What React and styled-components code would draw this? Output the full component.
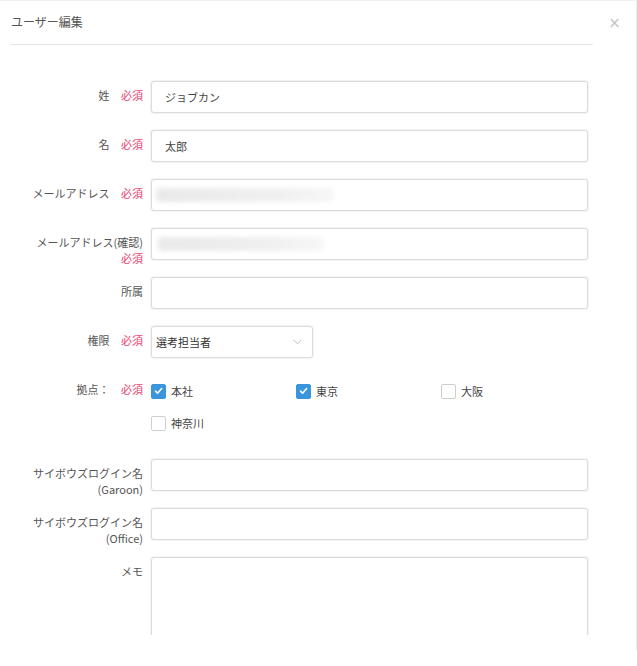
import React from "react";
import styled, { createGlobalStyle } from "styled-components";

const Global = createGlobalStyle`
  html, body { margin: 0; padding: 0; background: #fff; }
  body { font-family: "Open Sans", "Noto Sans CJK JP", sans-serif; color: #555; }
  * { box-sizing: border-box; }
`;

const Page = styled.div`
  width: 637px;
  height: 650px;
  border-top: 1px solid #f1f1f1;
  border-right: 1px solid #ececec;
`;

const Modal = styled.div`
  width: 636px;
  height: 634px;
  overflow: hidden;
  background: #fff;
`;

const Header = styled.div`
  display: flex;
  align-items: stretch;
  padding-left: 10px;
`;

const TitleBar = styled.div`
  width: 583px;
  height: 44px;
  display: flex;
  align-items: center;
  padding: 0 1px 3px;
  border-bottom: 1px solid #e6e6e6;
`;

const Title = styled.h2`
  margin: 0;
  font-size: 12px;
  font-weight: 400;
  color: #555;
  font-family: "Noto Sans CJK JP", sans-serif;
`;

const Close = styled.button`
  flex: 1;
  border: 0;
  background: none;
  height: 44px;
  padding: 0;
  font-size: 15px;
  color: #c4c4c4;
  font-family: "DejaVu Sans", sans-serif;
  cursor: pointer;
`;

const Form = styled.div`
  display: grid;
  grid-template-columns: 143px 437px;
  column-gap: 8px;
  row-gap: 17px;
  padding-top: 36px;
`;

const Label = styled.div`
  height: 32px;
  padding: 6px 0 0 20px;
  text-align: right;
  font-size: 11px;
  line-height: 16px;
  color: #555;
  font-family: "Noto Sans CJK JP", sans-serif;
`;

const Req = styled.span`
  color: #e8436f;
  margin-left: 9px;
  white-space: nowrap;
`;

const Input = styled.div`
  height: 32px;
  border: 1px solid #dcdcdc;
  box-shadow: 0 0 0 1px #f3f3f3;
  border-radius: 3px;
  display: flex;
  align-items: center;
  padding-left: ${p => p.$pad ?? 13}px;
  font-size: 11px;
  color: #444;
  font-family: "Noto Sans CJK JP", sans-serif;
  background: #fff;
`;

const TextArea = styled(Input)`
  height: 110px;
`;

const Blur = styled.span`
  display: block;
  height: 14px;
  border-radius: 4px;
  background: linear-gradient(90deg, #e9e9e9, #f0f0f0 70%, #f7f7f7);
  filter: blur(2.5px);
`;

const Select = styled.div`
  width: 162px;
  height: 32px;
  border: 1px solid #dcdcdc;
  box-shadow: 0 0 0 1px #f3f3f3;
  border-radius: 3px;
  display: flex;
  align-items: center;
  justify-content: space-between;
  padding: 0 10px 0 4px;
  font-size: 11px;
  color: #333;
  font-family: "Noto Sans CJK JP", sans-serif;
`;

const Checks = styled.div`
  display: grid;
  grid-template-columns: repeat(3, 145px);
  grid-auto-rows: 32px;
  padding-bottom: 3px;
`;

const CheckItem = styled.label`
  display: flex;
  align-items: center;
  gap: 5px;
  font-size: 11px;
  color: #444;
  font-family: "Noto Sans CJK JP", sans-serif;
`;

const Box = styled.span`
  width: 15px;
  height: 15px;
  border-radius: 2px;
  display: flex;
  align-items: center;
  justify-content: center;
  background: ${p => (p.$on ? "#3a95dc" : "#fff")};
  border: 1px solid ${p => (p.$on ? "#3a95dc" : "#cfcfcf")};
`;

const Check = ({ on, label }) => (
  <CheckItem>
    <Box $on={on}>
      {on && (
        <svg width="9" height="8" viewBox="0 0 9 8">
          <path d="M1.5 4.2 L3.6 6.2 L7.6 1.6" fill="none" stroke="#fff" strokeWidth="1.6" strokeLinecap="round" strokeLinejoin="round" />
        </svg>
      )}
    </Box>
    {label}
  </CheckItem>
);

const Chevron = () => (
  <svg width="9" height="6" viewBox="0 0 9 6">
    <path d="M0.5 0.8 L4.5 4.8 L8.5 0.8" fill="none" stroke="#bdbdbd" strokeWidth="1" />
  </svg>
);

const Row = ({ label, req, children }) => (
  <>
    <Label>
      {label}
      {req && <> <Req>必須</Req></>}
    </Label>
    {children}
  </>
);

export default function App() {
  return (
    <Page>
      <Global />
      <Modal>
        <Header>
          <TitleBar>
            <Title>ユーザー編集</Title>
          </TitleBar>
          <Close aria-label="close">×</Close>
        </Header>
        <Form>
          <Row label="姓" req>
            <Input>ジョブカン</Input>
          </Row>
          <Row label="名" req>
            <Input>太郎</Input>
          </Row>
          <Row label="メールアドレス" req>
            <Input $pad={4}>
              <Blur style={{ width: 178 }} />
            </Input>
          </Row>
          <Row label="メールアドレス(確認)" req>
            <Input $pad={6}>
              <Blur style={{ width: 166 }} />
            </Input>
          </Row>
          <Row label="所属">
            <Input />
          </Row>
          <Row label="権限" req>
            <Select>
              選考担当者
              <Chevron />
            </Select>
          </Row>
          <Row label="拠点：" req>
            <Checks>
              <Check on label="本社" />
              <Check on label="東京" />
              <Check label="大阪" />
              <Check label="神奈川" />
            </Checks>
          </Row>
          <Row label="サイボウズログイン名(Garoon)">
            <Input />
          </Row>
          <Row label="サイボウズログイン名(Office)">
            <Input />
          </Row>
          <Row label="メモ">
            <TextArea />
          </Row>
        </Form>
      </Modal>
    </Page>
  );
}
